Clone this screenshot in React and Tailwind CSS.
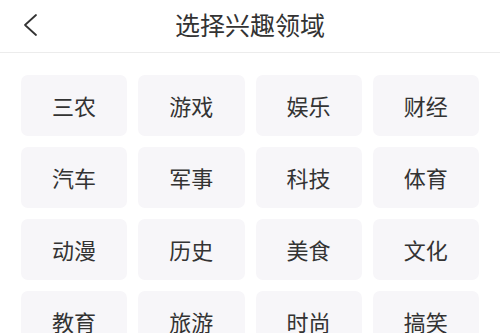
import React from 'react';

const topics = ['三农', '游戏', '娱乐', '财经', '汽车', '军事', '科技', '体育', '动漫', '历史', '美食', '文化', '教育', '旅游', '时尚', '搞笑'];

const App = () => {
  return (
    <div className="w-[500px] h-[333px] overflow-hidden bg-white" style={{ fontFamily: '"Noto Sans CJK SC", "Noto Sans", sans-serif' }}>
      <div className="relative h-[53px] flex items-center justify-center border-b border-[#ececec]">
        <button className="absolute left-[20px] top-[11px] text-[#333]">
          <svg width="22" height="28" viewBox="0 0 22 28" fill="none" stroke="#333" strokeWidth="1.8" strokeLinecap="round" strokeLinejoin="round">
            <path d="M16 4 L5 14 L16 24" />
          </svg>
        </button>
        <h1 className="text-[25px] leading-none text-[#333] -mt-[4px]">选择兴趣领域</h1>
      </div>

      <div className="grid grid-cols-4 gap-x-[11px] gap-y-[11px] px-[21px] pt-[22px]">
        {topics.map((t) => (
          <div key={t} className="h-[61px] rounded-[7px] bg-[#f7f6f9] flex items-center justify-center text-[22px] text-[#333]">
            {t}
          </div>
        ))}
      </div>
    </div>
  );
};

export default App;
